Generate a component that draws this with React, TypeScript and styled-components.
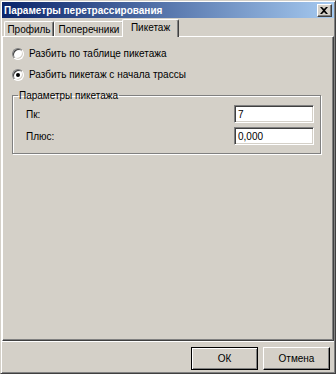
import React from "react";
import styled, { createGlobalStyle } from "styled-components";

const Global = createGlobalStyle`
  html, body { margin: 0; padding: 0; background: #d4d0c8; }
  body { font-family: "Liberation Sans", Arial, sans-serif; font-size: 10px; color: #000; }
  * { box-sizing: border-box; }
`;

const Window = styled.div`
  width: 336px;
  height: 374px;
  background: #d4d0c8;
  border-top: 1px solid #d4d0c8;
  border-left: 1px solid #d4d0c8;
  border-right: 1px solid #404040;
  border-bottom: 1px solid #404040;
  box-shadow: inset 1px 1px 0 #fff, inset -1px -1px 0 #808080;
  padding: 1px;
  display: flex;
  flex-direction: column;
`;

const TitleBar = styled.div`
  height: 16px;
  flex: none;
  background: linear-gradient(to right, #0a246a, #a6caf0);
  display: flex;
  align-items: center;
  justify-content: space-between;
  padding: 0 2px 0 2px;
`;

const Title = styled.span`
  color: #fff;
  font-weight: bold;
  font-size: 10px;
`;

const CloseBtn = styled.div`
  width: 15px;
  height: 13px;
  background: #d4d0c8;
  border-top: 1px solid #fff;
  border-left: 1px solid #fff;
  border-right: 1px solid #404040;
  border-bottom: 1px solid #404040;
  box-shadow: inset -1px -1px 0 #808080;
  display: flex;
  align-items: center;
  justify-content: center;
  padding-right: 1px;
`;

const Body = styled.div`
  flex: 1;
  display: flex;
  flex-direction: column;
  padding-top: 1px;
`;

const TabRow = styled.div`
  display: flex;
  align-items: flex-end;
  height: 17px;
  padding-left: 2px;
`;

const Tab = styled.div<{ $active?: boolean; $w: number }>`
  width: ${(p) => p.$w}px;
  flex: none;
  height: ${(p) => (p.$active ? "18px" : "15px")};
  margin: ${(p) => (p.$active ? "0 0 -1px -2px" : "0")};
  background: #d4d0c8;
  border-top: 1px solid #fff;
  border-left: 1px solid #fff;
  border-right: 1px solid #404040;
  box-shadow: inset -1px 0 0 #808080;
  border-radius: 2px 2px 0 0;
  display: flex;
  align-items: center;
  justify-content: center;
  padding-bottom: ${(p) => (p.$active ? "2px" : "0")};
  position: relative;
  z-index: ${(p) => (p.$active ? 2 : 1)};
`;

const Panel = styled.div`
  flex: 1;
  background: #d4d0c8;
  border-top: 1px solid #fff;
  border-left: 1px solid #fff;
  border-right: 1px solid #404040;
  border-bottom: 1px solid #404040;
  box-shadow: inset -1px -1px 0 #808080;
  padding: 10px 12px 0 9px;
  display: flex;
  flex-direction: column;
`;

const RadioRow = styled.label`
  display: flex;
  align-items: center;
  gap: 5px;
  height: 13px;
  margin: 0 0 8px 0;
`;

const RadioCircle = styled.span<{ $checked?: boolean }>`
  width: 12px;
  height: 12px;
  border-radius: 50%;
  background: #fff;
  border: 1px solid;
  border-color: #808080 #fff #fff #808080;
  box-shadow: inset 1px 1px 0 #404040, inset -1px -1px 0 #d4d0c8;
  display: flex;
  align-items: center;
  justify-content: center;
  &::after {
    content: "";
    width: 4px;
    height: 4px;
    border-radius: 50%;
    background: ${(p) => (p.$checked ? "#000" : "transparent")};
  }
`;

const Group = styled.fieldset`
  margin: 1px 0 0 0;
  padding: 4px 6px 8px 13px;
  border: 1px solid #808080;
  box-shadow: 1px 1px 0 #fff, inset 1px 1px 0 #fff;
  display: flex;
  flex-direction: column;
  gap: 4px;
`;

const Legend = styled.legend`
  padding: 0 1px;
  margin-left: -8px;
`;

const FieldRow = styled.div`
  display: flex;
  align-items: center;
  justify-content: space-between;
`;

const Input = styled.div`
  width: 80px;
  height: 18px;
  background: #fff;
  border-top: 1px solid #808080;
  border-left: 1px solid #808080;
  border-right: 1px solid #fff;
  border-bottom: 1px solid #fff;
  box-shadow: inset 1px 1px 0 #404040, inset -1px -1px 0 #d4d0c8;
  padding: 1px 3px 0;
  display: flex;
  align-items: center;
`;

const Footer = styled.div`
  height: 31px;
  flex: none;
  display: flex;
  justify-content: flex-end;
  align-items: flex-start;
  gap: 5px;
  padding: 5px 4px 0 0;
  border-top: 1px solid #fff;
`;

const Button = styled.div<{ $default?: boolean }>`
  width: 67px;
  height: 23px;
  background: #d4d0c8;
  border: 1px solid ${(p) => (p.$default ? "#000" : "#fff")};
  border-right-color: #000;
  border-bottom-color: #000;
  display: flex;
  align-items: center;
  justify-content: center;
  box-shadow: ${(p) =>
    p.$default
      ? "inset 1px 1px 0 #fff, inset -1px -1px 0 #808080"
      : "inset -1px -1px 0 #808080"};
`;

export default function App() {
  return (
    <>
      <Global />
      <Window>
        <TitleBar>
          <Title>Параметры перетрассирования</Title>
          <CloseBtn>
            <svg width="8" height="7" viewBox="0 0 8 7">
              <path d="M0 0h2l2 2 2-2h2L5 3.5 8 7H6L4 5 2 7H0l3-3.5z" fill="#000" />
            </svg>
          </CloseBtn>
        </TitleBar>
        <Body>
          <TabRow>
            <Tab $w={50}>Профиль</Tab>
            <Tab $w={70}>Поперечники</Tab>
            <Tab $w={57} $active>Пикетаж</Tab>
          </TabRow>
          <Panel>
            <RadioRow>
              <RadioCircle />
              Разбить по таблице пикетажа
            </RadioRow>
            <RadioRow>
              <RadioCircle $checked />
              Разбить пикетаж с начала трассы
            </RadioRow>
            <Group>
              <Legend>Параметры пикетажа</Legend>
              <FieldRow>
                <span>Пк:</span>
                <Input>7</Input>
              </FieldRow>
              <FieldRow>
                <span>Плюс:</span>
                <Input>0,000</Input>
              </FieldRow>
            </Group>
          </Panel>
          <Footer>
            <Button $default>ОК</Button>
            <Button>Отмена</Button>
          </Footer>
        </Body>
      </Window>
    </>
  );
}
